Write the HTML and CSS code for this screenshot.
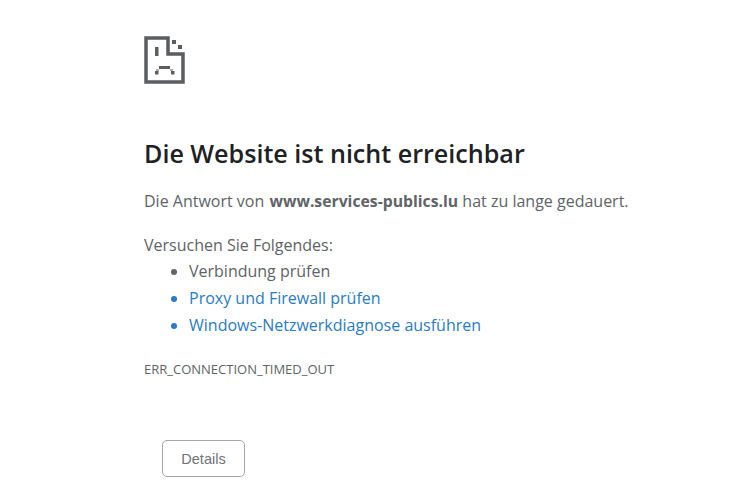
FILE: index.html
```html
<!DOCTYPE html>
<html lang="de">
<head>
<meta charset="utf-8">
<title>Die Website ist nicht erreichbar</title>
<link rel="stylesheet" href="styles.css">
</head>
<body>
<main class="page">
<svg class="icon" width="41" height="49" viewBox="0 0 41 49" aria-hidden="true">
<path d="M2 3H24V19H39V47H2Z" fill="none" stroke="#5a5d61" stroke-width="3.5"/>
<rect x="28" y="5" width="4" height="4" fill="#5a5d61"/>
<rect x="34" y="10" width="4" height="4" fill="#5a5d61"/>
<rect x="11" y="12" width="3.5" height="9" fill="#5a5d61"/>
<rect x="15" y="31" width="11" height="3" fill="#5a5d61"/>
<rect x="12" y="34" width="3" height="2" fill="#5a5d61" opacity="0.5"/>
<rect x="26" y="34" width="3" height="2" fill="#5a5d61" opacity="0.5"/>
<rect x="11" y="36" width="3.5" height="3.5" fill="#5a5d61"/>
<rect x="27" y="36" width="3.5" height="3.5" fill="#5a5d61"/>
</svg>
<h1 class="title">Die Website ist nicht erreichbar</h1>
<p class="lead">Die Antwort von <strong class="host">www.services-publics.lu</strong> hat zu lange gedauert.</p>
<p class="try">Versuchen Sie Folgendes:</p>
<ul class="list">
<li>Verbindung prüfen</li>
<li class="link">Proxy und Firewall prüfen</li>
<li class="link">Windows-Netzwerkdiagnose ausführen</li>
</ul>
<p class="code">ERR_CONNECTION_TIMED_OUT</p>
<button class="details" type="button">Details</button>
</main>
</body>
</html>
```
FILE: styles.css
```css
html, body { margin: 0; background: #fff; }
body { font-family: "Open Sans", "Liberation Sans", sans-serif; color: #606468; overflow: hidden; }
.page { padding: 35px 0 0 144px; display: flex; flex-direction: column; align-items: flex-start; }
.icon { display: block; margin-bottom: 51px; }
.title { margin: 0; font-size: 25.1px; line-height: 36px; font-weight: 600; color: #202124; }
.lead { margin: 17px 0 0; font-size: 16px; line-height: 26px; white-space: nowrap; }
.host { margin-left: 1px; font-size: 15.75px; font-weight: 700; }
.try { margin: 18px 0 0; font-size: 16px; line-height: 26px; }
.list { margin: 0; padding: 0 0 0 45px; font-size: 16px; line-height: 27px; }
.link { color: #2a7cc4; }
.code { margin: 21px 0 0; font-size: 13px; line-height: 18px; }
.details { margin: 62px 0 0 18px; width: 83px; height: 37px; border: 1px solid #a3a6aa; border-radius: 5px; background: #fff; color: #6f7276; font: 14.5px "Liberation Sans", sans-serif; }
```
